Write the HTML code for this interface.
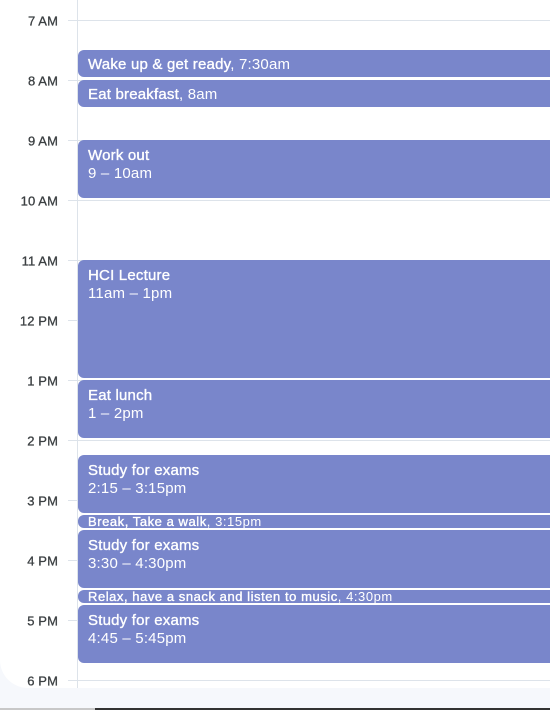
<!DOCTYPE html>
<html><head><style>
body{margin:0;width:550px;height:710px;overflow:hidden;background:#f6f8fc;font-family:"Liberation Sans",Arial,sans-serif;position:relative}
.main{position:absolute;left:0;top:0;width:550px;height:688px;background:#fff;border-bottom-left-radius:28px}
.lbl{position:absolute;right:492px;font-size:13px;color:#3c4043;letter-spacing:0.1px;transform:translateY(-50%);-webkit-text-stroke:0.3px #3c4043}
.hl{position:absolute;left:68px;width:482px;height:1px;background:#dde3ea}
.vl{position:absolute;left:77px;top:0;width:1px;height:688px;background:#dde3ea}
.ev{position:absolute;left:78px;width:472px;background:#7986cb;color:#fff;border-radius:6px 0 0 6px;box-sizing:border-box;padding:7px 10px 0;font-size:15px;line-height:18px;letter-spacing:0.2px;white-space:nowrap;overflow:hidden}
.ev b{font-weight:normal;-webkit-text-stroke:0.35px #fff}
.sm{font-size:13px;line-height:14px;padding:0 10px;letter-spacing:0.55px}
.one{padding:6px 10px 0;line-height:18px}
</style></head><body>
<div class="main">
<div class="vl"></div>
<div class="hl" style="top:20px"></div><div class="lbl" style="top:21px">7 AM</div>
<div class="hl" style="top:80px"></div><div class="lbl" style="top:81px">8 AM</div>
<div class="hl" style="top:140px"></div><div class="lbl" style="top:141px">9 AM</div>
<div class="hl" style="top:200px"></div><div class="lbl" style="top:201px">10 AM</div>
<div class="hl" style="top:260px"></div><div class="lbl" style="top:261px">11 AM</div>
<div class="hl" style="top:320px"></div><div class="lbl" style="top:321px">12 PM</div>
<div class="hl" style="top:380px"></div><div class="lbl" style="top:381px">1 PM</div>
<div class="hl" style="top:440px"></div><div class="lbl" style="top:441px">2 PM</div>
<div class="hl" style="top:500px"></div><div class="lbl" style="top:501px">3 PM</div>
<div class="hl" style="top:560px"></div><div class="lbl" style="top:561px">4 PM</div>
<div class="hl" style="top:620px"></div><div class="lbl" style="top:621px">5 PM</div>
<div class="hl" style="top:680px"></div><div class="lbl" style="top:681px">6 PM</div>

<div class="ev one" style="top:50px;height:27px"><b>Wake up &amp; get ready</b>, 7:30am</div>
<div class="ev one" style="top:80px;height:27px"><b>Eat breakfast</b>, 8am</div>
<div class="ev" style="top:140px;height:58px"><b>Work out</b><br>9 – 10am</div>
<div class="ev" style="top:260px;height:118px"><b>HCI Lecture</b><br>11am – 1pm</div>
<div class="ev" style="top:380px;height:58px"><b>Eat lunch</b><br>1 – 2pm</div>
<div class="ev" style="top:455px;height:58px"><b>Study for exams</b><br>2:15 – 3:15pm</div>
<div class="ev sm" style="top:515px;height:13px"><b>Break, Take a walk</b>, 3:15pm</div>
<div class="ev" style="top:530px;height:58px"><b>Study for exams</b><br>3:30 – 4:30pm</div>
<div class="ev sm" style="top:590px;height:13px"><b>Relax, have a snack and listen to music</b>, 4:30pm</div>
<div class="ev" style="top:605px;height:58px"><b>Study for exams</b><br>4:45 – 5:45pm</div>
</div>
<div style="position:absolute;left:0;top:708px;width:95px;height:2px;background:#c8c8c8"></div>
<div style="position:absolute;left:95px;top:708px;width:455px;height:2px;background:#333"></div>
</body></html>
